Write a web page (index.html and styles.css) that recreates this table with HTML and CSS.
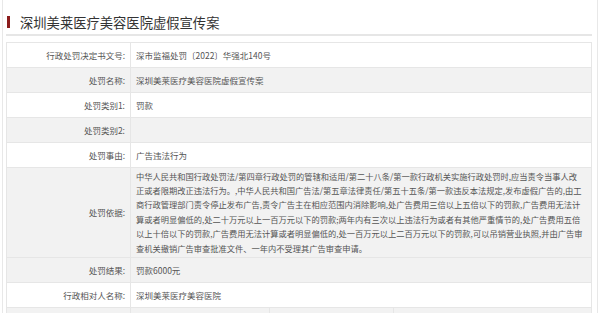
FILE: index.html
```html
<!DOCTYPE html>
<html lang="zh-CN">
<head>
<meta charset="utf-8">
<title>深圳美莱医疗美容医院虚假宣传案</title>
<link rel="stylesheet" href="styles.css">
</head>
<body>
<div class="page">
  <h1 class="title"><span class="bar"></span>深圳美莱医疗美容医院虚假宣传案</h1>
  <div class="info">
    <div class="row"><div class="lab">行政处罚决定书文号:</div><div class="val">深市监福处罚〔2022〕华强北140号</div></div>
    <div class="row alt"><div class="lab">处罚名称:</div><div class="val">深圳美莱医疗美容医院虚假宣传案</div></div>
    <div class="row"><div class="lab">处罚类别1:</div><div class="val">罚款</div></div>
    <div class="row alt"><div class="lab">处罚类别2:</div><div class="val"></div></div>
    <div class="row"><div class="lab">处罚事由:</div><div class="val">广告违法行为</div></div>
    <div class="row alt"><div class="lab">处罚依据:</div><div class="val basis">中华人民共和国行政处罚法/第四章行政处罚的管辖和适用/第二十八条/第一款行政机关实施行政处罚时,应当责令当事人改<br>正或者限期改正违法行为。,中华人民共和国广告法/第五章法律责任/第五十五条/第一款违反本法规定,发布虚假广告的,由工<br>商行政管理部门责令停止发布广告,责令广告主在相应范围内消除影响,处广告费用三倍以上五倍以下的罚款,广告费用无法计<br>算或者明显偏低的,处二十万元以上一百万元以下的罚款;两年内有三次以上违法行为或者有其他严重情节的,处广告费用五倍<br>以上十倍以下的罚款,广告费用无法计算或者明显偏低的,处一百万元以上二百万元以下的罚款,可以吊销营业执照,并由广告审<br>查机关撤销广告审查批准文件、一年内不受理其广告审查申请。</div></div>
    <div class="row alt"><div class="lab">处罚结果:</div><div class="val">罚款6000元</div></div>
    <div class="row"><div class="lab">行政相对人名称:</div><div class="val">深圳美莱医疗美容医院</div></div>
    <div class="row four alt"><div class="lab"></div><div class="val"></div><div class="lab"></div><div class="val"></div></div>
  </div>
</div>
</body>
</html>
```

FILE: styles.css
```css
html, body {
  margin: 0;
  padding: 0;
  background: #fff;
  height: 100%;
  overflow: hidden;
}
body {
  font-family: "Noto Sans CJK SC", "Noto Sans", sans-serif;
  color: #555;
}
.page {
  margin-left: 2px;
  width: 586px;
  min-height: 313px;
  border-left: 1px solid #e8e8e8;
  border-right: 1px solid #e8e8e8;
  padding: 0 5px 0 3px;
}
.title {
  margin: 0;
  padding-top: 10px;
  height: 24px;
  display: flex;
  align-items: center;
  font-size: 13.3px;
  font-weight: normal;
  color: #333;
  border-bottom: 2px solid #e6e6e6;
}
.bar {
  width: 3px;
  height: 12px;
  background: #8b1c1c;
  margin: 0 10px 0 1px;
}
.info {
  margin-top: 6px;
  border: 1px solid #e6e6e6;
  border-top: 0;
  font-size: 8.5px;
  line-height: 13px;
}
.row {
  display: grid;
  grid-template-columns: 124px 1fr;
  border-top: 1px solid #e6e6e6;
  background: #fff;
  min-height: 24px;
}
.row.alt {
  background: #f2f2f2;
}
.row.four {
  grid-template-columns: 124px 139px 124px 1fr;
}
.lab {
  text-align: right;
  padding: 5.5px 5px 5.5px 0;
  border-right: 1px solid #e6e6e6;
  display: flex;
  align-items: center;
  justify-content: flex-end;
  white-space: nowrap;
}
.val {
  padding: 5.5px 4px 5.5px 5px;
  white-space: nowrap;
}
.val.basis {
  font-size: 8.25px;
  line-height: 14.4px;
  padding-top: 0.5px;
  padding-bottom: 2.1px;
}
.four .val {
  border-right: 1px solid #e6e6e6;
}
.four .val:last-child {
  border-right: 0;
}
```
